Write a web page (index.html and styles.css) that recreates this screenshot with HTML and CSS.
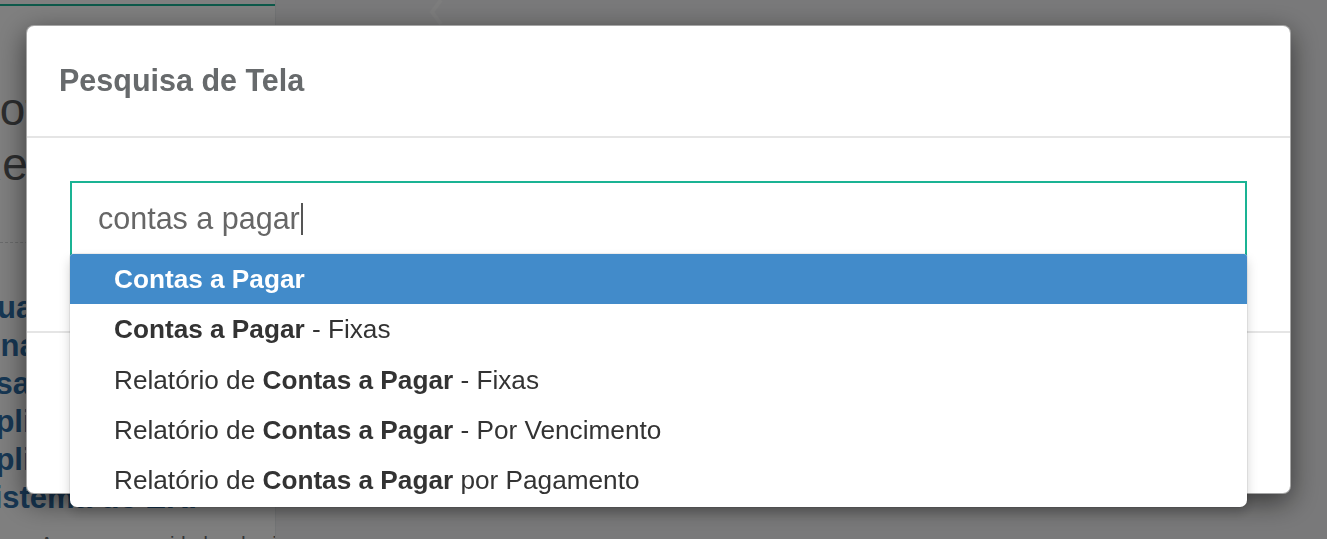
FILE: index.html
```html
<!DOCTYPE html>
<html lang="pt-BR">
<head>
<meta charset="utf-8">
<title>Pesquisa de Tela</title>
<link rel="stylesheet" href="styles.css">
</head>
<body>
<div class="page">
  <aside class="side">
    <div class="accent"></div>
    <div class="big">
      <div>Potencial</div>
      <div>Recebimentos</div>
    </div>
    <div class="dash"></div>
    <div class="links">
      <div>Qualidade</div>
      <div>Financeiro</div>
      <div>Usabilidade</div>
      <div>Aplicativo</div>
      <div>Aplicações</div>
      <div>Sistema de ERP</div>
    </div>
    <p class="note">Acesse as novidades do sistema</p>
  </aside>
  <main class="main">
    <svg class="chev" width="16" height="26" viewBox="0 0 16 26"><polyline points="13,0 4,12 13,24" fill="none" stroke="rgba(255,255,255,0.55)" stroke-width="4"/></svg>
  </main>
</div>

<div class="backdrop"></div>
<div class="modal-wrap">
  <div class="modal">
    <div class="modal-header">
      <h4 class="modal-title">Pesquisa de Tela</h4>
    </div>
    <div class="modal-body">
      <div class="search">
        <div class="field" role="textbox">contas a pagar<span class="caret"></span></div>
        <ul class="menu">
          <li class="item active"><b>Contas a Pagar</b></li>
          <li class="item"><b>Contas a Pagar</b> - Fixas</li>
          <li class="item">Relatório de <b>Contas a Pagar</b> - Fixas</li>
          <li class="item">Relatório de <b>Contas a Pagar</b> - Por Vencimento</li>
          <li class="item">Relatório de <b>Contas a Pagar</b> por Pagamento</li>
        </ul>
      </div>
    </div>
    <div class="modal-footer"></div>
  </div>
</div>
</body>
</html>
```
FILE: styles.css
```css
html, body {
  margin: 0;
  padding: 0;
  height: 100%;
  overflow: hidden;
}
body {
  font-family: "Liberation Sans", Arial, sans-serif;
  color: #676a6c;
}
.page {
  display: flex;
  height: 539px;
}
.side {
  width: 275px;
  flex: none;
  background: #ffffff;
  border-right: 1px solid #e7eaec;
  overflow: hidden;
}
.accent {
  margin-top: 4px;
  height: 2px;
  background: #1ab394;
}
.big {
  margin-top: 76px;
  margin-left: -31px;
  font-family: "Liberation Sans", sans-serif;
  font-weight: 400;
  font-size: 46px;
  line-height: 55px;
  color: #5a5c5e;
  white-space: nowrap;
}
.dash {
  margin-top: 50px;
  border-top: 1px dashed #d5d7d8;
}
.links {
  margin-top: 46px;
  margin-left: -27px;
  font-weight: 700;
  font-size: 31px;
  line-height: 38px;
  color: #2f6fa8;
  white-space: nowrap;
}
.note {
  margin: 16px 0 0 40px;
  font-size: 20px;
  color: #676a6c;
  white-space: nowrap;
}
.main {
  flex: 1;
  background: #f3f3f4;
}
.chev {
  display: block;
  margin-left: 152px;
}

.backdrop {
  position: fixed;
  inset: 0;
  background: rgba(0, 0, 0, 0.5);
}
.modal-wrap {
  position: fixed;
  inset: 0;
  padding: 25px 0 0 26px;
}
.modal {
  width: 1265px;
  box-sizing: border-box;
  background: #ffffff;
  border: 1px solid rgba(0, 0, 0, 0.35);
  border-radius: 8px;
  box-shadow: 0 8px 28px rgba(0, 0, 0, 0.55);
  display: flex;
  flex-direction: column;
}
.modal-header {
  padding: 38px 32px 39px;
  border-bottom: 2px solid #e5e5e5;
}
.modal-title {
  margin: 0;
  font-size: 30.5px;
  line-height: 33px;
  font-weight: 700;
  color: #676a6c;
}
.modal-body {
  padding: 43px 43px 75px;
}
.search {
  position: relative;
}
.field {
  height: 75px;
  box-sizing: border-box;
  border: 2px solid #1ab394;
  padding: 0 26px;
  font-size: 30.5px;
  line-height: 71px;
  color: #666666;
  display: flex;
  align-items: center;
}
.caret {
  display: inline-block;
  width: 2px;
  height: 32px;
  margin-left: 1px;
  background: #555555;
}
.menu {
  position: absolute;
  top: 73px;
  left: 0;
  right: 0;
  margin: 0;
  padding: 0 0 2px;
  list-style: none;
  background: #ffffff;
  border-radius: 3px 3px 7px 7px;
  overflow: hidden;
  box-shadow: 0 6px 12px rgba(0, 0, 0, 0.175), 0 0 0 1px rgba(0, 0, 0, 0.06);
}
.item {
  height: 50.25px;
  line-height: 50.25px;
  padding-left: 44px;
  font-size: 26.2px;
  color: #333333;
  white-space: nowrap;
}
.item b {
  font-weight: 700;
}
.item.active {
  background: #428bca;
  color: #ffffff;
}
.modal-footer {
  height: 160px;
  border-top: 2px solid #e5e5e5;
}
```
